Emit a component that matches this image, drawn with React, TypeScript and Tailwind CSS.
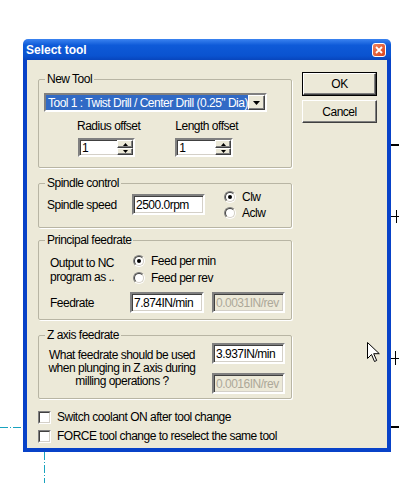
import React from 'react'
import clsx from 'clsx'

const body = "font-['Liberation_Sans',sans-serif] text-[12px] leading-[14px] tracking-[-0.5px] text-black whitespace-nowrap"

function Sunken({ className, children, disabled }: { className?: string; children?: React.ReactNode; disabled?: boolean }) {
  return (
    <div
      className={clsx(
        'flex items-center border-2 border-t-[#808080] border-l-[#808080] border-b-white border-r-white shadow-[inset_1px_1px_0_#404040,inset_-1px_-1px_0_#d4d0c8]',
        disabled ? 'bg-[#ece9d8] text-[#aca899]' : 'bg-white text-black',
        className,
      )}
    >
      {children}
    </div>
  )
}

function Field({ value, disabled, width }: { value: string; disabled?: boolean; width: string }) {
  return (
    <Sunken disabled={disabled} className={clsx('h-[21px] pl-[2px]', width)}>
      {value}
    </Sunken>
  )
}

function Triangle({ dir, size = 'sm' }: { dir: 'up' | 'down'; size?: 'sm' | 'lg' }) {
  if (size === 'lg') {
    return (
      <svg width="7" height="4" viewBox="0 0 7 4">
        <path d="M0 0h7L3.5 4z" fill="#000" />
      </svg>
    )
  }
  return (
    <svg width="5" height="3" viewBox="0 0 5 3">
      <path d={dir === 'up' ? 'M2.5 0L5 3H0z' : 'M0 0h5L2.5 3z'} fill="#000" />
    </svg>
  )
}

function Raised({ className, children }: { className?: string; children?: React.ReactNode }) {
  return (
    <div
      className={clsx(
        'flex items-center justify-center bg-[#ece9d8] border border-t-white border-l-white border-r-[#404040] border-b-[#404040] shadow-[inset_-1px_-1px_0_#808080]',
        className,
      )}
    >
      {children}
    </div>
  )
}

function Spin({ value, width }: { value: string; width: string }) {
  return (
    <Sunken className={clsx('h-[19px] items-stretch', width)}>
      <div className="flex-1 flex items-center pl-[2px]">{value}</div>
      <div className="w-[16px] flex flex-col">
        <Raised className="h-[8px]">
          <Triangle dir="up" />
        </Raised>
        <Raised className="h-[7px]">
          <Triangle dir="down" />
        </Raised>
      </div>
    </Sunken>
  )
}

function Radio({ label, checked }: { label: string; checked?: boolean }) {
  return (
    <div className="flex items-center h-[16px]">
      <div className="w-[12px] h-[12px] rounded-full border border-t-[#808080] border-l-[#808080] border-r-white border-b-white">
        <div className="w-full h-full rounded-full border border-t-[#404040] border-l-[#404040] border-r-[#d4d0c8] border-b-[#d4d0c8] bg-white flex items-center justify-center">
          {checked && <div className="w-[4px] h-[4px] rounded-full bg-black" />}
        </div>
      </div>
      <span className="ml-[6px]">{label}</span>
    </div>
  )
}

function Check({ label }: { label: string }) {
  return (
    <div className="flex items-center h-[16px]">
      <div className="w-[13px] h-[13px] border border-t-[#808080] border-l-[#808080] border-r-white border-b-white">
        <div className="w-full h-full border border-t-[#404040] border-l-[#404040] border-r-[#d4d0c8] border-b-[#d4d0c8] bg-white" />
      </div>
      <span className="ml-[6px]">{label}</span>
    </div>
  )
}

function Group({ title, className, children }: { title: string; className?: string; children: React.ReactNode }) {
  return (
    <fieldset className={clsx('border border-[#b8b5a4] rounded-[2px] shadow-[1px_1px_0_#fff]', className)}>
      <legend className="ml-[6px] px-[2px]">{title}</legend>
      {children}
    </fieldset>
  )
}

function Backdrop() {
  return (
    <svg className="absolute inset-0" width="399" height="483" viewBox="0 0 399 483">
      <g stroke="#000">
        <path d="M391 145h8" strokeWidth="2" />
        <path d="M391 216.5h8M396.5 210v13" strokeWidth="1" />
        <path d="M391 358.5h8M395.5 351v14" strokeWidth="1" />
        <path d="M391 427h8" strokeWidth="2" />
      </g>
      <g stroke="#1aa3bf" strokeWidth="1" strokeDasharray="8 2 1 2">
        <path d="M0 427.5h23" />
        <path d="M44.5 452v31" />
      </g>
    </svg>
  )
}

function Cursor() {
  return (
    <svg className="absolute left-[367px] top-[342px]" width="13" height="21" viewBox="0 0 13 21">
      <path d="M0.5 0.5v16l4-4 3 7 2.2-1-3-6.8h5.6z" fill="#fff" stroke="#000" strokeWidth="1" strokeLinejoin="round" />
    </svg>
  )
}

export default function App() {
  return (
    <div className="relative w-[399px] h-[483px] bg-white overflow-hidden">
      <Backdrop />

      <div className="absolute left-[23px] top-[39px] w-[368px] h-[413px] flex flex-col">
        <div className="h-[21px] shrink-0 rounded-t-[5px] bg-[linear-gradient(#3b83f0,#0e5ad8_30%,#0a53d0_80%,#0845bd)] flex items-center pl-[3px] pr-[5px]">
          <span className="font-['Liberation_Sans',sans-serif] font-bold text-[12px] text-white">Select tool</span>
          <div className="ml-auto w-[14px] h-[14px] rounded-[3px] border border-white bg-[linear-gradient(135deg,#f0835d,#d9431c)] flex items-center justify-center">
            <svg width="8" height="8" viewBox="0 0 8 8">
              <path d="M1 1l6 6M7 1L1 7" stroke="#fff" strokeWidth="1.8" />
            </svg>
          </div>
        </div>

        <div className={clsx('flex-1 bg-[#ece9d8] border-[4px] border-t-0 border-[#0842c8] flex pt-[12px] pl-[11px] pr-[10px] gap-[10px]', body)}>
          <div className="w-[254px] flex flex-col">
            <Group title="New Tool" className="pt-[7px] pb-[10px]">
              <Sunken className="ml-[5px] w-[223px] h-[19px] items-stretch">
                <div className="flex-1 bg-[#316ac5] text-white flex items-center pl-[2px] overflow-hidden">
                  {'Tool 1 : Twist Drill / Center Drill (0.25" Dia)'}
                </div>
                <Raised className="w-[17px]">
                  <Triangle dir="down" size="lg" />
                </Raised>
              </Sunken>
              <div className="flex mt-[7px]">
                <div className="ml-[39px] flex flex-col">
                  <span className="ml-[-1px]">Radius offset</span>
                  <div className="mt-[5px]">
                    <Spin value="1" width="w-[57px]" />
                  </div>
                </div>
                <div className="ml-[35px] flex flex-col">
                  <span>Length offset</span>
                  <div className="mt-[5px]">
                    <Spin value="1" width="w-[58px]" />
                  </div>
                </div>
              </div>
            </Group>

            <Group title="Spindle control" className="mt-[8px] pb-[6px]">
              <div className="flex items-start">
                <div className="flex items-center mt-[4px]">
                  <span className="pl-[8px] w-[93px]">Spindle speed</span>
                  <Field value="2500.0rpm" width="w-[73px]" />
                </div>
                <div className="ml-[19px] mt-[-1px] flex flex-col">
                  <Radio label="Clw" checked />
                  <Radio label="Aclw" />
                </div>
              </div>
            </Group>

            <Group title="Principal feedrate" className="mt-[5px] pt-[6px] pb-[6px]">
              <div className="flex items-center">
                <div className="pl-[11px] w-[94px] flex flex-col">
                  <span>Output to NC</span>
                  <span>program as ..</span>
                </div>
                <div className="flex flex-col gap-[1px]">
                  <Radio label="Feed per min" checked />
                  <Radio label="Feed per rev" />
                </div>
              </div>
              <div className="flex items-center mt-[6px]">
                <span className="pl-[11px] w-[91px]">Feedrate</span>
                <Field value="7.874IN/min" width="w-[74px]" />
                <div className="ml-[8px]">
                  <Field value="0.0031IN/rev" width="w-[73px]" disabled />
                </div>
              </div>
            </Group>

            <Group title="Z axis feedrate" className="mt-[8px] pt-[1px] pb-[4px]">
              <div className="flex items-center">
                <div className="ml-[8px] w-[150px] text-center leading-[13px] flex flex-col">
                  <span>What feedrate should be used</span>
                  <span>when plunging in Z axis during</span>
                  <span>milling operations ?</span>
                </div>
                <div className="ml-[15px] flex flex-col gap-[9px]">
                  <Field value="3.937IN/min" width="w-[73px]" />
                  <Field value="0.0016IN/rev" width="w-[73px]" disabled />
                </div>
              </div>
            </Group>

            <div className="mt-[10px] flex flex-col gap-[3px]">
              <Check label="Switch coolant ON after tool change" />
              <Check label="FORCE tool change to reselect the same tool" />
            </div>
          </div>

          <div className="w-[75px] flex flex-col">
            <div className="h-[24px] border border-black flex">
              <Raised className="flex-1">OK</Raised>
            </div>
            <Raised className="h-[23px] mt-[4px]">Cancel</Raised>
          </div>
        </div>
      </div>

      <Cursor />
    </div>
  )
}
